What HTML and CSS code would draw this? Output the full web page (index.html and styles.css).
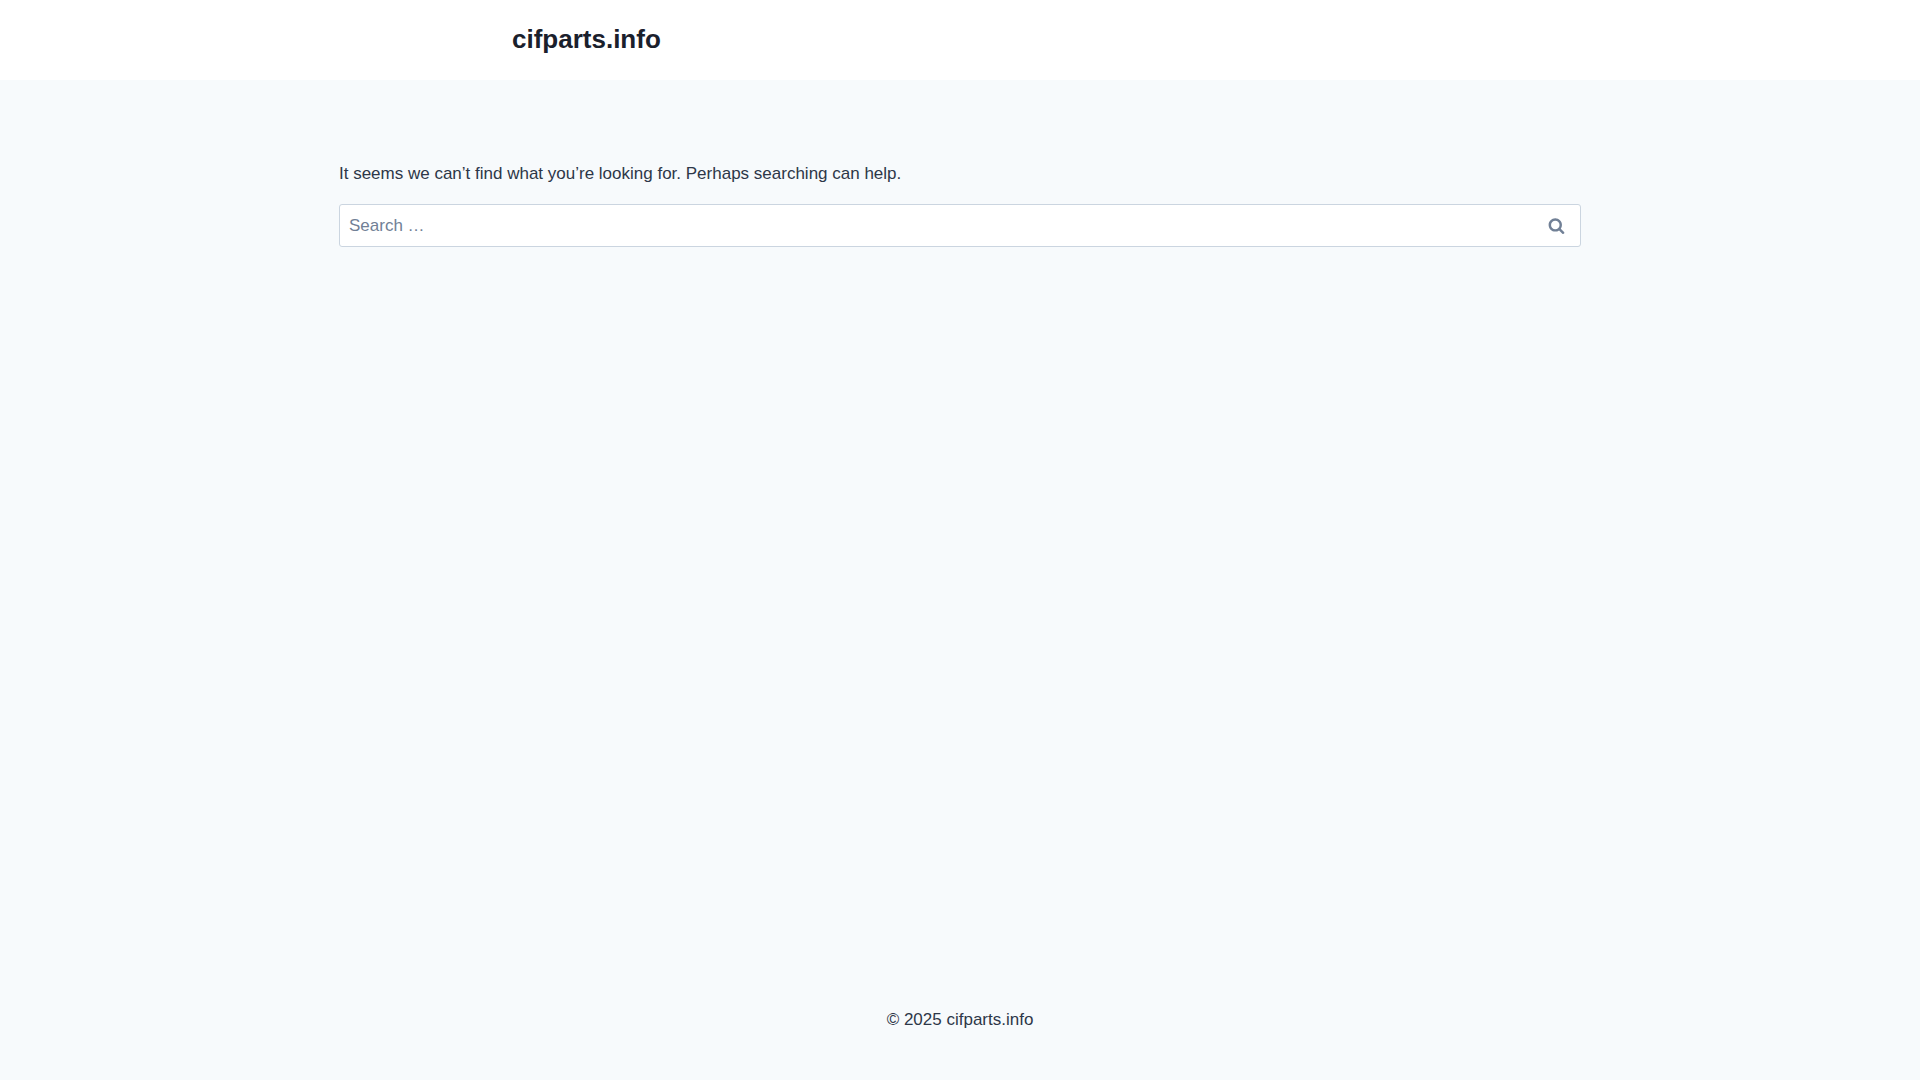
FILE: index.html
```html
<!DOCTYPE html>
<html lang="en">
<head>
<meta charset="utf-8">
<meta name="viewport" content="width=device-width, initial-scale=1">
<title>cifparts.info</title>
<link rel="stylesheet" href="styles.css">
</head>
<body>
<header class="site-header">
  <div class="header-inner">
    <a class="site-title" href="#">cifparts.info</a>
  </div>
</header>
<main class="content">
  <p class="message">It seems we can’t find what you’re looking for. Perhaps searching can help.</p>
  <form class="search-form" role="search">
    <input class="search-field" type="search" placeholder="Search …" aria-label="Search for:">
    <button class="search-submit" type="submit" aria-label="Search">
      <svg class="search-icon" viewBox="0 0 26 28" aria-hidden="true"><path fill="currentColor" d="M18 13c0-3.859-3.141-7-7-7s-7 3.141-7 7 3.141 7 7 7 7-3.141 7-7zM26 26c0 1.094-0.906 2-2 2-0.531 0-1.047-0.219-1.406-0.594l-5.359-5.344c-1.828 1.266-4.016 1.937-6.234 1.937-6.078 0-11-4.922-11-11s4.922-11 11-11 11 4.922 11 11c0 2.219-0.672 4.406-1.937 6.234l5.359 5.359c0.359 0.359 0.578 0.875 0.578 1.406z"/></svg>
    </button>
  </form>
</main>
<footer class="site-footer">
  <p class="copyright">© 2025 cifparts.info</p>
</footer>
</body>
</html>
```

FILE: styles.css
```css
*, *::before, *::after {
  box-sizing: border-box;
}

body {
  display: flex;
  flex-direction: column;
  min-height: 100vh;
  margin: 0;
  background: #f7fafc;
  color: #2d3748;
  font-family: "Liberation Sans", Arial, sans-serif;
  font-size: 17px;
  line-height: 27px;
}

.site-header {
  background: #fff;
}

.header-inner {
  display: flex;
  align-items: center;
  width: 100%;
  max-width: 944px;
  min-height: 80px;
  margin: 0 auto;
  padding: 0 24px 2px;
}

.site-title {
  color: #1a202c;
  font-size: 26px;
  font-weight: 700;
  line-height: 31px;
  text-decoration: none;
}

.content {
  flex: 1;
  width: 100%;
  max-width: 1290px;
  margin: 0 auto;
  padding: 80px 24px;
}

.message {
  margin: 0 0 17px;
}

.search-form {
  display: flex;
  align-items: stretch;
  background: #fff;
  border: 1px solid #cbd5e0;
  border-radius: 3px;
}

.search-field {
  flex: 1;
  min-width: 0;
  margin: 0;
  padding: 8px 9px;
  border: 0;
  background: transparent;
  color: #2d3748;
  font: inherit;
  line-height: 25px;
  appearance: none;
}

.search-field::placeholder {
  color: #718096;
  opacity: 1;
}

.search-submit {
  display: flex;
  align-items: center;
  justify-content: center;
  width: 48px;
  padding: 0;
  border: 0;
  background: transparent;
  color: #718096;
  cursor: pointer;
}

.search-icon {
  width: 17px;
  height: 17px;
}

.site-footer {
  padding: 30px 24px;
  text-align: center;
}

.copyright {
  margin: 0;
  padding: 16px 0 17px;
}
```
